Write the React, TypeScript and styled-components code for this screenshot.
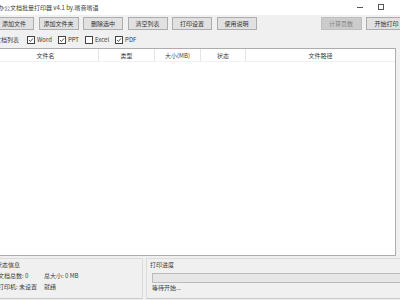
import React from 'react';
import styled, { createGlobalStyle } from 'styled-components';

const GlobalStyle = createGlobalStyle`
  html, body {
    margin: 0;
    padding: 0;
    width: 400px;
    height: 300px;
    overflow: hidden;
    background: #f0f0f0;
  }
  body {
    font-family: "Noto Sans CJK SC", "Noto Sans", sans-serif;
    font-size: 6px;
    color: #3c3c3c;
  }
`;

const columns = [
  { key: 'name', label: '文件名', width: '106px' },
  { key: 'type', label: '类型', width: '56px' },
  { key: 'size', label: '大小(MB)', width: '46px' },
  { key: 'state', label: '状态', width: '45px' },
  { key: 'path', label: '文件路径', width: '1fr' },
];

const leftButtons = ['添加文件', '添加文件夹', '删除选中', '清空列表', '打印设置', '使用说明'];
const fileTypes = [
  { label: 'Word', checked: true },
  { label: 'PPT', checked: true },
  { label: 'Excel', checked: false },
  { label: 'PDF', checked: true },
];

const App = () => {
  return (
    <>
      <GlobalStyle />
      <Window>
        <TitleBar>
          <Title>办公文档批量打印器 v4.1 by.嗜音嗜语</Title>
          <Caption>
            <MinGlyph />
          </Caption>
          <Caption>
            <MaxGlyph />
          </Caption>
          <Caption $wide>
            <CloseGlyph>✕</CloseGlyph>
          </Caption>
        </TitleBar>

        <Toolbar>
          <ButtonGroup>
            {leftButtons.map((b) => (
              <Button key={b}>{b}</Button>
            ))}
          </ButtonGroup>
          <ButtonGroup>
            <Button disabled $wide>
              计算页数
            </Button>
            <Button $wide>开始打印</Button>
          </ButtonGroup>
        </Toolbar>

        <FilterRow>
          <FilterLabel>文档列表</FilterLabel>
          {fileTypes.map((t) => (
            <Check key={t.label}>
              <Box>
                {t.checked && (
                  <svg width="6" height="6" viewBox="0 0 6 6">
                    <polyline
                      points="1,3 2.4,4.5 5,1.4"
                      fill="none"
                      stroke="#444"
                      strokeWidth="0.9"
                    />
                  </svg>
                )}
              </Box>
              {t.label}
            </Check>
          ))}
        </FilterRow>

        <Table>
          <HeaderRow $cols={columns.map((c) => c.width).join(' ')}>
            {columns.map((c) => (
              <HeaderCell key={c.key}>{c.label}</HeaderCell>
            ))}
          </HeaderRow>
        </Table>

        <Bottom>
          <Group $width="151px">
            <GroupTitle>状态信息</GroupTitle>
            <InfoRow>
              <span>文档总数: 0</span>
              <span>总大小: 0 MB</span>
            </InfoRow>
            <InfoRow>
              <span>打印机: 未设置</span>
              <span>就绪</span>
            </InfoRow>
          </Group>
          <Group $grow>
            <GroupTitle>打印进度</GroupTitle>
            <Progress />
            <ProgressText>等待开始...</ProgressText>
          </Group>
        </Bottom>
      </Window>
    </>
  );
};

const Window = styled.div`
  width: 428px;
  height: 300px;
  margin-left: -10px;
  display: flex;
  flex-direction: column;
  background: #f0f0f0;
`;

const TitleBar = styled.div`
  height: 15px;
  display: flex;
  align-items: center;
  padding-left: 8px;
  background: #ffffff;
`;

const Title = styled.div`
  flex: 1;
  font-size: 6px;
  color: #3c3c3c;
  white-space: nowrap;
`;

const Caption = styled.div<{ $wide?: boolean }>`
  width: ${(p) => (p.$wide ? '27px' : '21px')};
  height: 15px;
  display: flex;
  align-items: center;
  justify-content: center;
`;

const MinGlyph = styled.div`
  width: 6px;
  height: 1px;
  background: #555;
`;

const MaxGlyph = styled.div`
  width: 4px;
  height: 4px;
  border: 1px solid #555;
  margin-top: -2px;
`;

const CloseGlyph = styled.span`
  font-size: 6px;
  color: #555;
`;

const Toolbar = styled.div`
  height: 17px;
  display: flex;
  align-items: center;
  justify-content: space-between;
  padding: 0 11px 0 4px;
`;

const ButtonGroup = styled.div`
  display: flex;
  gap: 4.5px;
`;

const Button = styled.button<{ $wide?: boolean }>`
  width: ${(p) => (p.$wide ? '41px' : '40px')};
  height: 13px;
  padding: 0;
  margin: 0;
  box-sizing: border-box;
  border: 1px solid #adadad;
  background: #e1e1e1;
  font-family: "Noto Sans CJK SC", "Noto Sans", sans-serif;
  font-size: 6px;
  color: #333;
  white-space: nowrap;
  &:disabled {
    background: #cccccc;
    border-color: #bfbfbf;
    color: #838383;
  }
`;

const FilterRow = styled.div`
  height: 15px;
  display: flex;
  align-items: center;
  gap: 6px;
  padding-left: 5px;
`;

const FilterLabel = styled.span`
  margin-right: 2px;
`;

const Check = styled.label`
  display: flex;
  align-items: center;
  gap: 2px;
  color: #3c3c3c;
`;

const Box = styled.span`
  width: 6px;
  height: 6px;
  border: 1px solid #444;
  background: #fff;
  display: flex;
  align-items: center;
  justify-content: center;
`;

const Table = styled.div`
  flex: 1;
  margin: 1px 22px 0 2px;
  border: 1px solid #adadad;
  background: #ffffff;
`;

const HeaderRow = styled.div<{ $cols: string }>`
  display: grid;
  grid-template-columns: ${(p) => p.$cols};
  height: 12px;
  border-bottom: 1px solid #f0f0f0;
`;

const HeaderCell = styled.div`
  display: flex;
  align-items: center;
  justify-content: center;
  border-right: 1px solid #e5e5e5;
  color: #3c3c3c;
  &:last-child {
    border-right: none;
  }
`;

const Bottom = styled.div`
  height: 44px;
  box-sizing: border-box;
  display: flex;
  gap: 3px;
  padding: 2px 0 1px 2px;
`;

const Group = styled.div<{ $width?: string; $grow?: boolean }>`
  width: ${(p) => p.$width || 'auto'};
  flex: ${(p) => (p.$grow ? 1 : 'none')};
  box-sizing: border-box;
  border: 1px solid #dcdcdc;
  border-bottom-color: #c8c8c8;
  padding: 0 0 0 3px;
  display: flex;
  flex-direction: column;
`;

const GroupTitle = styled.div`
  line-height: 11px;
`;

const InfoRow = styled.div`
  display: grid;
  grid-template-columns: 46px 1fr;
  line-height: 11px;
  padding-left: 2px;
`;

const Progress = styled.div`
  height: 10px;
  box-sizing: border-box;
  margin: 3px 0 0 2px;
  border: 1px solid #bcbcbc;
  background: #e6e6e6;
`;

const ProgressText = styled.div`
  line-height: 10px;
  padding-left: 2px;
`;

export default App;
